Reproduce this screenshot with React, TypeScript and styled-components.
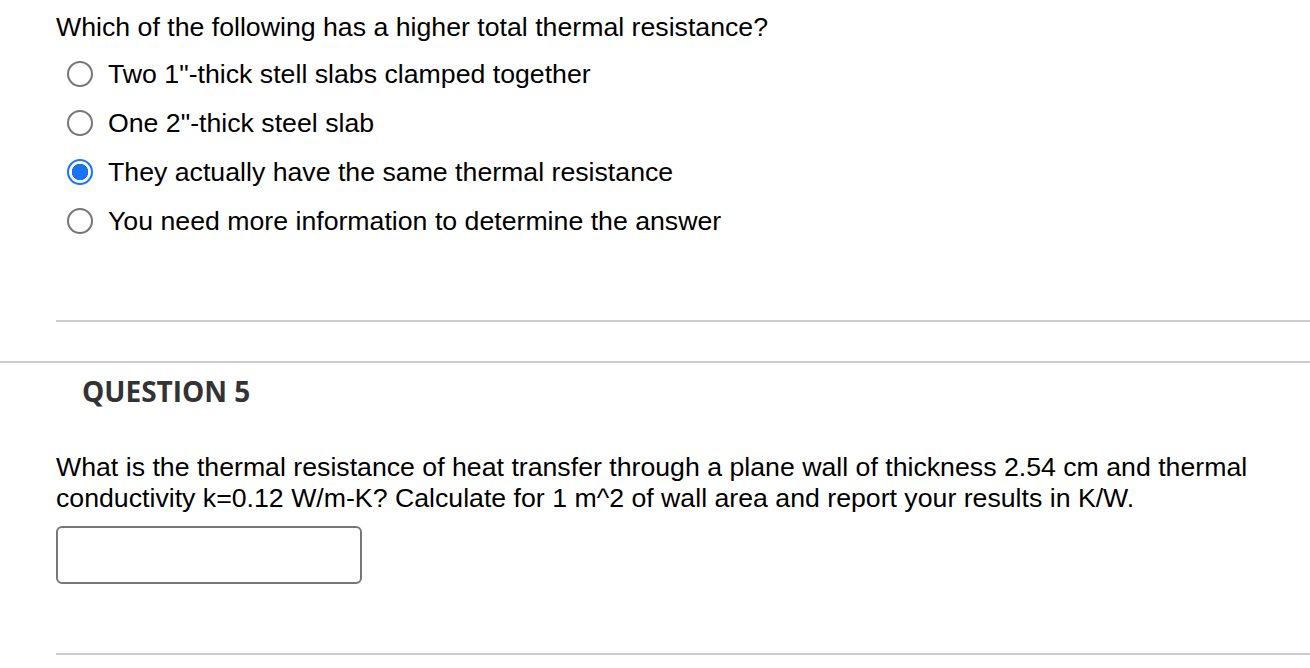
import styled, { createGlobalStyle } from "styled-components";

const GlobalStyle = createGlobalStyle`
  html, body {
    margin: 0;
    padding: 0;
    background: #ffffff;
  }
  body {
    font-family: "Liberation Sans", Arial, sans-serif;
    color: #000;
  }
`;

const options = [
  { label: 'Two 1"-thick stell slabs clamped together', checked: false },
  { label: 'One 2"-thick steel slab', checked: false },
  { label: "They actually have the same thermal resistance", checked: true },
  { label: "You need more information to determine the answer", checked: false },
];

const App = () => {
  return (
    <>
      <GlobalStyle />
      <Page>
        <Block>
          <Prompt>Which of the following has a higher total thermal resistance?</Prompt>
          <OptionList>
            {options.map((o) => (
              <Option key={o.label}>
                <Radio $checked={o.checked} />
                <OptionText>{o.label}</OptionText>
              </Option>
            ))}
          </OptionList>
        </Block>
        <Rule $inset />
        <Rule />
        <Heading>QUESTION 5</Heading>
        <Block>
          <Prompt $para>
            What is the thermal resistance of heat transfer through a plane wall of thickness 2.54 cm and thermal
            conductivity k=0.12 W/m-K? Calculate for 1 m^2 of wall area and report your results in K/W.
          </Prompt>
          <AnswerBox type="text" />
        </Block>
        <Rule $inset $bottom />
      </Page>
    </>
  );
};

const Page = styled.div`
  width: 1310px;
  height: 668px;
  overflow: hidden;
  padding-top: 12px;
  box-sizing: border-box;
`;

const Block = styled.div`
  padding-left: 56px;
`;

const Prompt = styled.p<{ $para?: boolean }>`
  margin: 0;
  font-size: 26.7px;
  line-height: ${(p) => (p.$para ? "31px" : "30px")};
  padding-right: 40px;
`;

const OptionList = styled.div`
  display: flex;
  flex-direction: column;
  gap: 19px;
  margin-top: 17px;
  padding-left: 11px;
`;

const Option = styled.label`
  display: flex;
  align-items: center;
  gap: 15px;
  height: 30px;
`;

const Radio = styled.span<{ $checked?: boolean }>`
  width: 26px;
  height: 26px;
  border-radius: 50%;
  box-sizing: border-box;
  border: 2px solid ${(p) => (p.$checked ? "#1a73f0" : "#767676")};
  background: ${(p) =>
    p.$checked ? "radial-gradient(circle, #1a73f0 0 8px, #fff 8.5px)" : "#fff"};
  flex-shrink: 0;
`;

const OptionText = styled.span`
  font-size: 26.7px;
`;

const Rule = styled.hr<{ $inset?: boolean; $bottom?: boolean }>`
  border: 0;
  height: 2px;
  background: #cccccc;
  margin: 0;
  margin-left: ${(p) => (p.$inset ? "56px" : "0")};
  margin-top: ${(p) => (p.$bottom ? "69px" : p.$inset ? "84px" : "39px")};
`;

const Heading = styled.h2`
  margin: 11px 0 0 82px;
  font-family: "Open Sans", sans-serif;
  font-weight: 700;
  font-size: 28px;
  line-height: 34px;
  color: #333333;
  margin-bottom: 44px;
`;

const AnswerBox = styled.input`
  display: block;
  margin-top: 12px;
  width: 306px;
  height: 58px;
  box-sizing: border-box;
  border: 2px solid #767676;
  border-radius: 6px;
  background: #fff;
  outline: none;
`;

export default App;
